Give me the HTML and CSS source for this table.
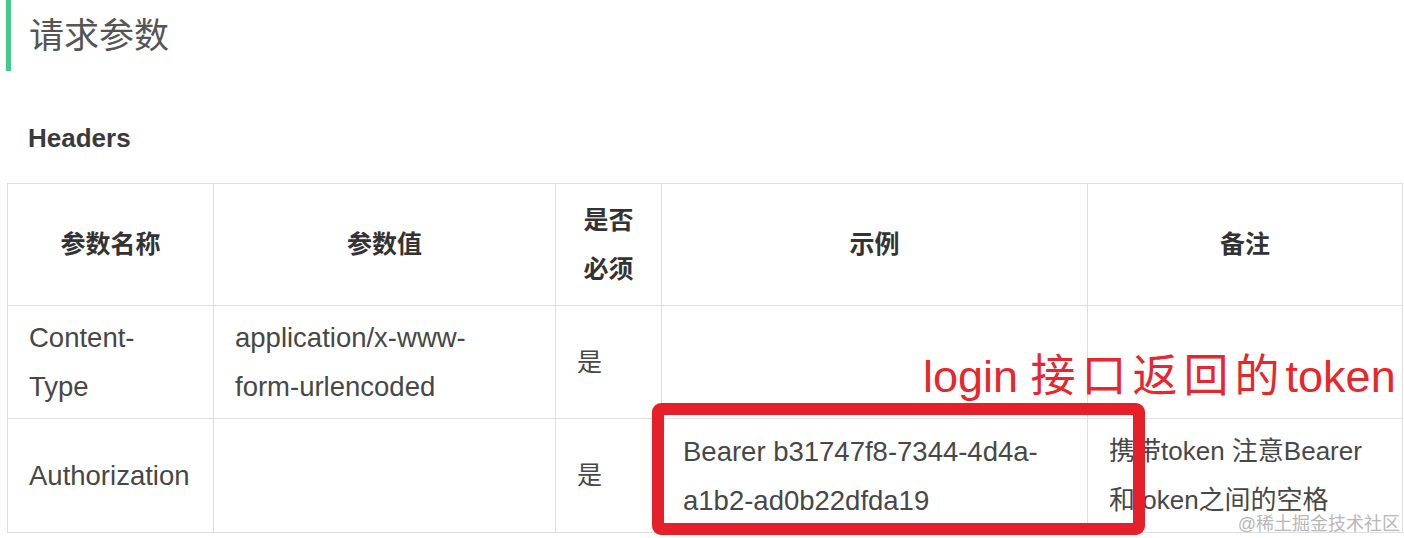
FILE: index.html
```html
<!DOCTYPE html>
<html lang="zh">
<head>
<meta charset="utf-8">
<title>请求参数</title>
<link rel="stylesheet" href="styles.css">
</head>
<body>
<div class="page">
  <h2 class="section-title">请求参数</h2>
  <h3 class="sub-title">Headers</h3>
  <table class="params">
    <colgroup>
      <col class="c-name"><col class="c-value"><col class="c-req"><col class="c-example"><col class="c-note">
    </colgroup>
    <thead>
      <tr class="row-head">
        <th>参数名称</th>
        <th>参数值</th>
        <th>是否<br>必须</th>
        <th>示例</th>
        <th>备注</th>
      </tr>
    </thead>
    <tbody>
      <tr class="row-a">
        <td>Content-<br>Type</td>
        <td>application/x-www-<br>form-urlencoded</td>
        <td class="cjk">是</td>
        <td></td>
        <td></td>
      </tr>
      <tr class="row-b">
        <td>Authorization</td>
        <td></td>
        <td class="cjk">是</td>
        <td>Bearer b31747f8-7344-4d4a-<br>a1b2-ad0b22dfda19</td>
        <td class="note-cell">携带token 注意Bearer<br>和token之间的空格</td>
      </tr>
    </tbody>
  </table>
  <div class="note-text">login <span class="note-cjk">接口返回的</span>token</div>
  <div class="note-box"></div>
  <div class="watermark">@稀土掘金技术社区</div>
</div>
</body>
</html>
```

FILE: styles.css
```css
html, body {
  margin: 0;
  padding: 0;
  background: #fff;
}
body {
  width: 1404px;
  height: 538px;
  overflow: hidden;
  font-family: "Liberation Sans", "Noto Sans CJK SC", sans-serif;
}
.page {
  position: relative;
  width: 1404px;
  height: 538px;
}
.section-title {
  margin: 0 0 0 6px;
  height: 71px;
  line-height: 71px;
  border-left: 5px solid #42c98b;
  padding-left: 18px;
  font-size: 35px;
  font-weight: normal;
  color: #555;
}
.sub-title {
  margin: 52px 0 30px 28px;
  height: 30px;
  line-height: 30px;
  font-size: 26px;
  font-weight: bold;
  color: #3a3a3a;
}
.params {
  margin-left: 7px;
  border-collapse: collapse;
  table-layout: fixed;
  width: 1395px;
  font-size: 27.5px;
  line-height: 49px;
  color: #474747;
}
.c-name { width: 206px; }
.c-value { width: 342px; }
.c-req { width: 106px; }
.c-example { width: 426px; }
.c-note { width: 315px; }
.params th, .params td {
  border: 1px solid #dedede;
  padding: 0 21px;
  vertical-align: middle;
}
.params th {
  text-align: center;
  font-weight: bold;
  color: #333;
  font-size: 25px;
  padding: 0 8px;
}
.params td {
  text-align: left;
}
.params td.cjk {
  font-size: 25px;
}
.params td.note-cell {
  font-size: 26px;
}
.row-head { height: 122px; }
.row-a { height: 113px; }
.row-b { height: 114px; }
.note-text {
  position: absolute;
  left: 923px;
  top: 349px;
  font-size: 45px;
  line-height: 56px;
  color: #e8262d;
  white-space: nowrap;
}
.note-cjk {
  letter-spacing: 6px;
}
.note-box {
  position: absolute;
  left: 652px;
  top: 403px;
  width: 469px;
  height: 108px;
  border: 12px solid #e5202a;
  border-radius: 9px;
}
.watermark {
  position: absolute;
  right: 4px;
  bottom: 1px;
  font-size: 18px;
  line-height: 26px;
  color: #b8b8b8;
  white-space: nowrap;
}
```
